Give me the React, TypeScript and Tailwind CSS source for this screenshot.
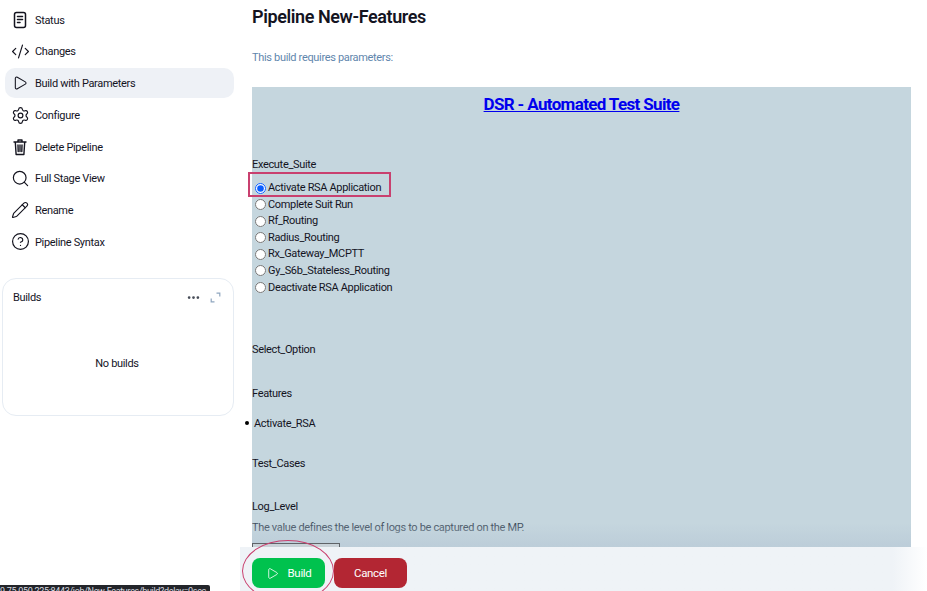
import { type FC, type ReactNode } from 'react';
import { CodeXml, Play, Settings, Search, Pencil, CircleHelp, Ellipsis } from 'lucide-react';

const StatusIcon = () => (
  <svg width="20" height="20" viewBox="0 0 20 20" fill="none" stroke="currentColor" strokeWidth="1.5" strokeLinecap="round">
    <rect x="4.5" y="2.5" width="11" height="15" rx="2" />
    <path d="M7.5 6.5h5M7.5 9.5h5M7.5 12.5h2.5" />
  </svg>
);

const TrashIcon = () => (
  <svg width="20" height="20" viewBox="0 0 20 20" fill="none" stroke="currentColor" strokeWidth="1.4" strokeLinecap="round" strokeLinejoin="round">
    <path d="M4 5h12M8 5V3h4v2M5.3 5l.8 12.5h7.8l.8-12.5M8 8l.2 6.5M10 8v6.5M12 8l-.2 6.5" />
  </svg>
);

const menu: { label: string; icon: ReactNode; active?: boolean }[] = [
  { label: 'Status', icon: <StatusIcon /> },
  { label: 'Changes', icon: <CodeXml size={19} strokeWidth={1.5} /> },
  { label: 'Build with Parameters', icon: <Play size={16} strokeWidth={1.6} />, active: true },
  { label: 'Configure', icon: <Settings size={19} strokeWidth={1.5} /> },
  { label: 'Delete Pipeline', icon: <TrashIcon /> },
  { label: 'Full Stage View', icon: <Search size={19} strokeWidth={1.5} /> },
  { label: 'Rename', icon: <Pencil size={18} strokeWidth={1.5} /> },
  { label: 'Pipeline Syntax', icon: <CircleHelp size={19} strokeWidth={1.5} /> },
];

const suites = [
  'Activate RSA Application',
  'Complete Suit Run',
  'Rf_Routing',
  'Radius_Routing',
  'Rx_Gateway_MCPTT',
  'Gy_S6b_Stateless_Routing',
  'Deactivate RSA Application',
];

const Sidebar: FC = () => (
  <aside className="w-[240px] shrink-0 pl-[5px] pr-[6px] pt-[5px]">
    <nav className="flex flex-col gap-[1.7px]">
      {menu.map(item => (
        <div
          key={item.label}
          className={`flex h-[30px] items-center gap-[5px] rounded-[10px] pl-[5px] text-[#14141f] ${item.active ? 'bg-[#eef1f6]' : ''}`}
        >
          <span className="flex w-[20px] justify-center">{item.icon}</span>
          <span className="pt-[2px] text-[11px]">{item.label}</span>
        </div>
      ))}
    </nav>
    <div className="-ml-[3px] mt-[21px] h-[138px] w-[232px] rounded-[14px] border border-[#e6ecf3] bg-white pl-[10px] pr-[12px]">
      <div className="flex h-[38px] items-center justify-between text-[#14141f]">
        <span className="text-[11px]">Builds</span>
        <span className="flex items-center gap-[9px]">
          <Ellipsis size={15} strokeWidth={2.4} className="text-[#444a55]" />
          <svg width="11" height="11" viewBox="0 0 11 11" fill="none" stroke="#8fa6bf" strokeWidth="1.2">
            <path d="M6.5 1.2h3.3v3.3M4.5 9.8H1.2V6.5" />
          </svg>
        </span>
      </div>
      <div className="pt-[39px] text-center text-[11px] text-[#14141f]">No builds</div>
    </div>
  </aside>
);

const Form: FC = () => (
  <div className="relative ml-3 mr-4 min-h-0 flex-1 overflow-hidden bg-[#c5d6de] text-[11px] leading-[16px] text-[#14141f]">
    <h2 className="pt-[7px] text-center text-[17px] leading-[21px] font-bold tracking-[-0.65px] text-[#0000ee] underline">
      DSR - Automated Test Suite
    </h2>
    <div className="mt-[42px]">Execute_Suite</div>
    <div className="mt-[7px] flex flex-col gap-[0.6px]">
      {suites.map((name, i) => (
        <label key={name} className="flex h-[16px] items-center gap-[2px]">
          <input type="radio" name="suite" defaultChecked={i === 0} className="m-0 ml-[3px] h-[11px] w-[11px] accent-[#0b5fff]" />
          {name}
        </label>
      ))}
    </div>
    <div className="mt-[46px]">Select_Option</div>
    <div className="mt-[28px]">Features</div>
    <div className="mt-[14px] pl-[2px]">Activate_RSA</div>
    <div className="mt-[24px]">Test_Cases</div>
    <div className="mt-[27px]">Log_Level</div>
    <div className="mt-[5px] text-[#3e4d5c]">The value defines the level of logs to be captured on the MP.</div>
    <div className="absolute inset-x-0 bottom-0 h-[24px] bg-gradient-to-b from-transparent to-[#bccdd9]" />
    <div className="relative mt-[7px] h-[8px] w-[88px] border border-[#5f6368] bg-[#c9d2d8]" />
  </div>
);

const App: FC = () => (
  <div className="relative flex h-[591px] w-[927px] overflow-hidden bg-white font-['Roboto',sans-serif] tracking-[-0.33px]">
    <Sidebar />
    <main className="flex min-w-0 flex-1 flex-col">
      <h1 className="ml-3 pt-[6px] text-[18px] leading-[22px] font-semibold tracking-[-0.4px] text-[#14141f]">Pipeline New-Features</h1>
      <p className="ml-3 mt-[22px] text-[11px] leading-[16px] text-[#5f86ad]">This build requires parameters:</p>
      <div className="h-[21px] shrink-0" />
      <Form />
      <div className="flex h-[44px] shrink-0 items-start gap-[9px] bg-gradient-to-r from-[#eff3f7] via-[#eff3f7] via-95% to-white pl-3 pt-[11px]">
        <button className="flex h-[30px] w-[73px] items-center justify-center gap-[9px] rounded-[8px] bg-[#00c24e] pt-[1px] text-[11.5px] text-white">
          <Play size={13} strokeWidth={1.5} />
          Build
        </button>
        <button className="h-[30px] w-[73px] rounded-[8px] bg-[#b32633] pt-[1px] text-[11.5px] text-white">Cancel</button>
      </div>
    </main>

    <div className="absolute left-[248px] top-[172px] h-[25px] w-[143px] border-2 border-[#c9406f]" />
    <div className="absolute left-[242px] top-[540px] h-[62px] w-[92px] rounded-[50%] border border-[#c9406f]" />
    <div className="absolute left-[245px] top-[421px] h-[4px] w-[4px] rounded-full bg-black" />
    <div className="absolute bottom-0 left-0 h-[6px] w-[210px] overflow-hidden rounded-tr-[2px] bg-[#23252a] text-[9px] leading-[13px] whitespace-nowrap text-[#d8dbe0]">
      9.75.050.225:8443/job/New-Features/build?delay=0sec
    </div>
  </div>
);

export default App;
